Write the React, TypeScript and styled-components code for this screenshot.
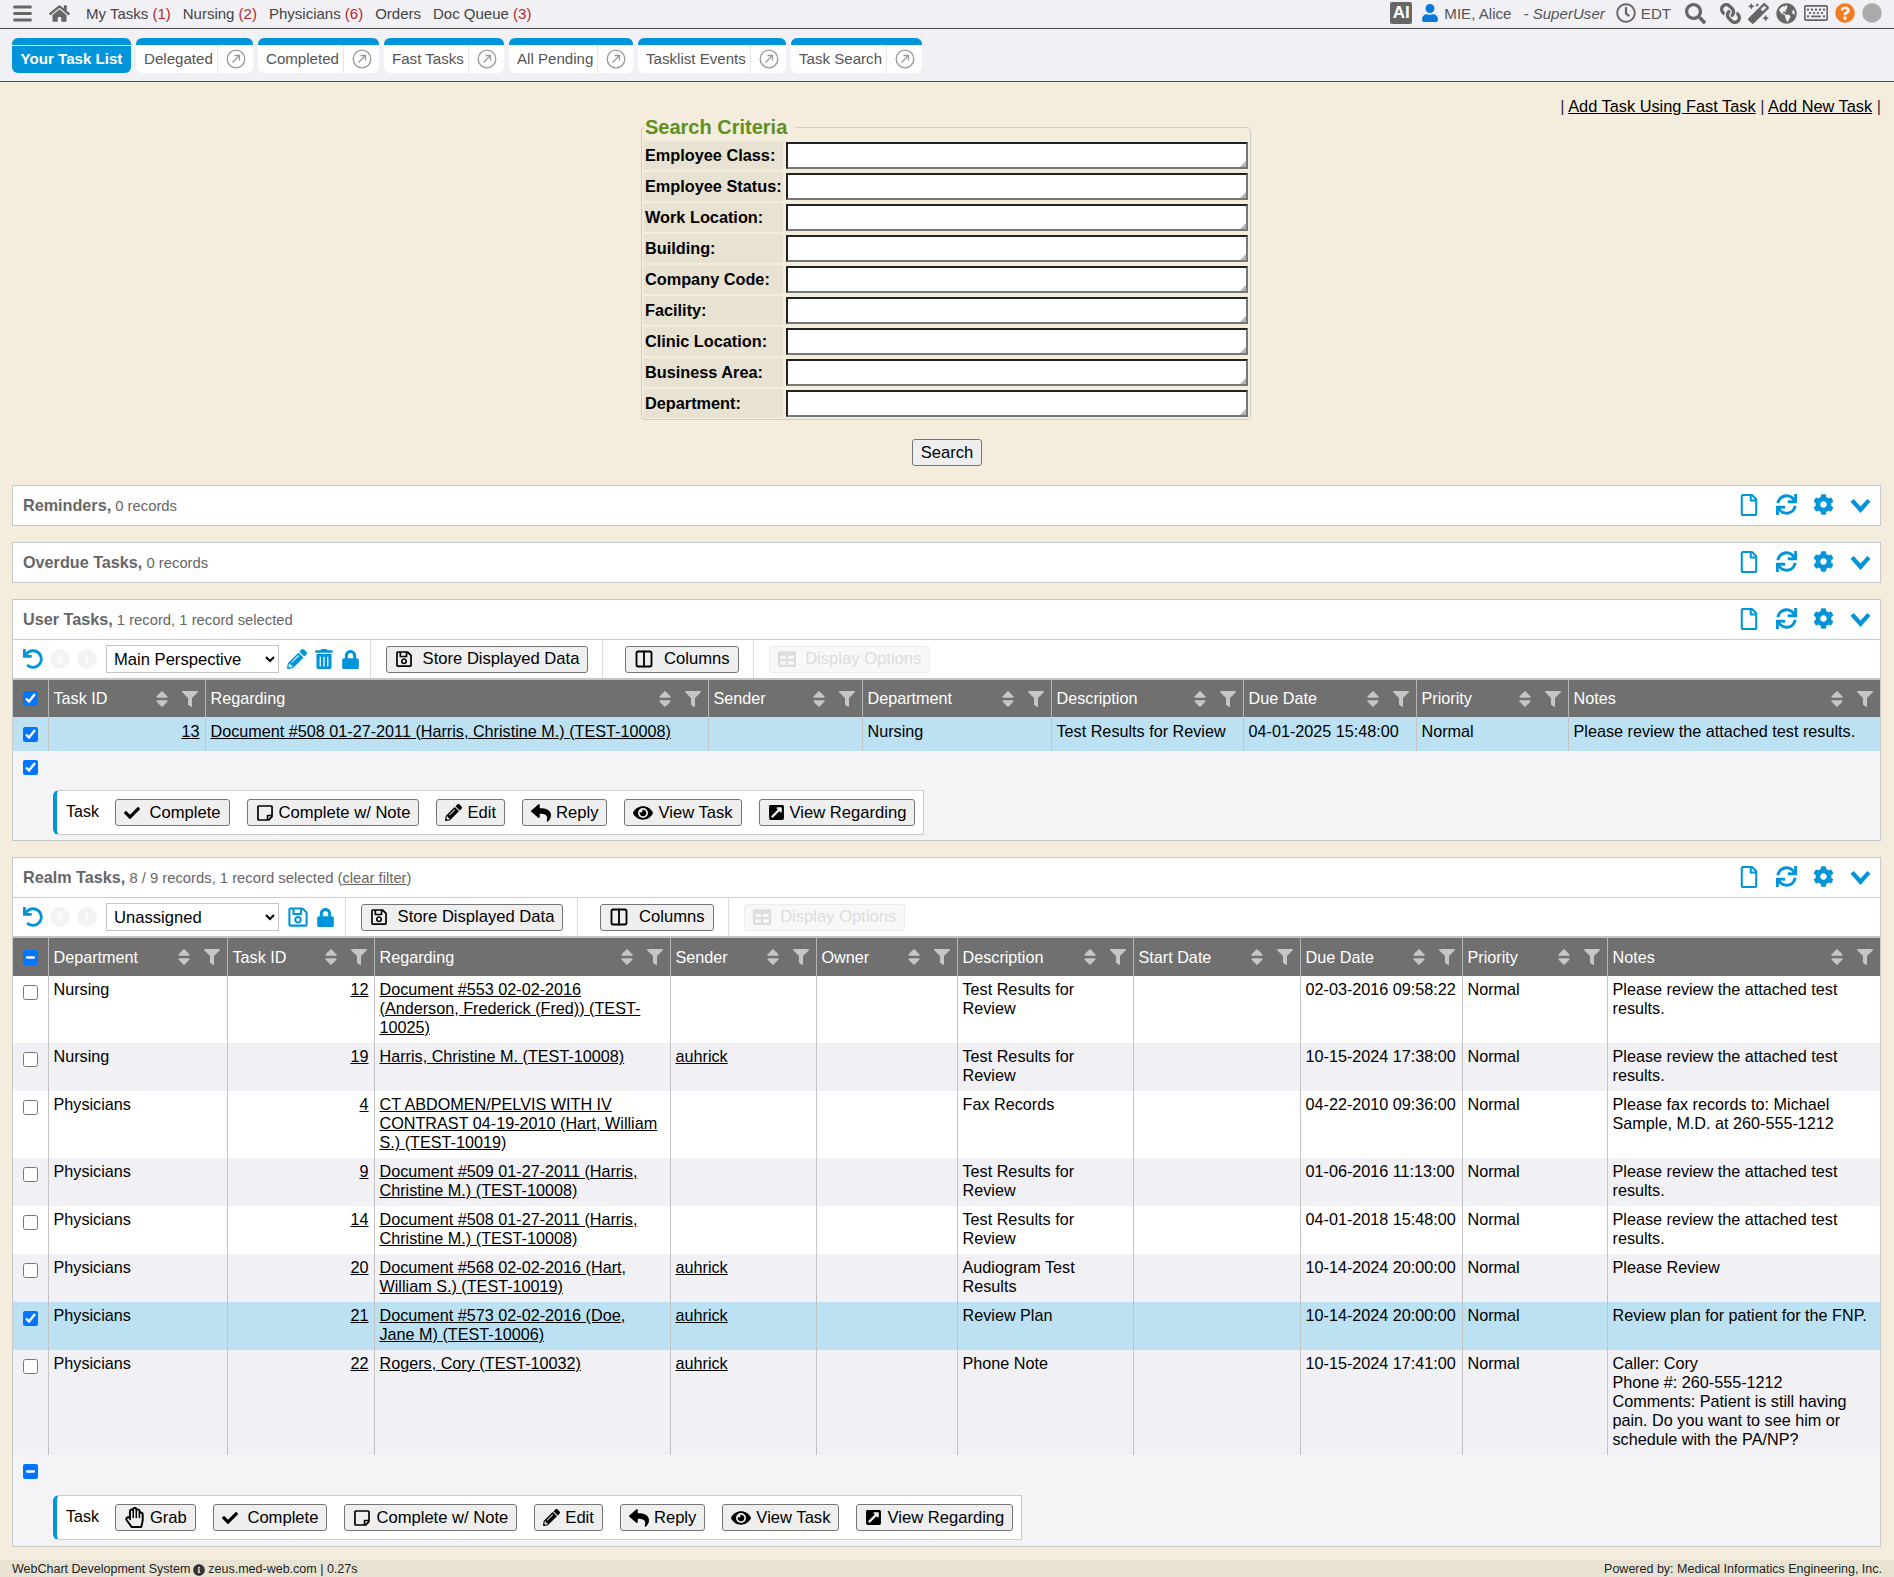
import React from 'react';
import styled, { createGlobalStyle } from 'styled-components';
import {
    FaBars,
    FaCheck,
    FaChevronLeft,
    FaChevronRight,
    FaCircle,
    FaCog,
    FaExternalLinkSquareAlt,
    FaEye,
    FaFilter,
    FaGlobeAmericas,
    FaHome,
    FaInfoCircle,
    FaLink,
    FaLock,
    FaMagic,
    FaPencilAlt,
    FaQuestionCircle,
    FaRegClock,
    FaRegFile,
    FaRegHandPaper,
    FaRegKeyboard,
    FaRegSave,
    FaRegStickyNote,
    FaReply,
    FaSearch,
    FaSort,
    FaSync,
    FaTable,
    FaTrashAlt,
    FaUndo,
    FaUser,
} from 'react-icons/fa';
import { Columns2 } from 'lucide-react';

const blue = '#0095da';
const fontStack = '"Liberation Sans", Arial, sans-serif';

const GlobalStyle = createGlobalStyle`
    html, body {
        margin: 0;
        padding: 0;
        background: #f4eddd;
        font-family: ${fontStack};
        font-size: 16px;
        color: #000;
    }
`;

const Page = styled.div`
    width: 1894px;
    height: 1577px;
    display: flex;
    flex-direction: column;
    overflow: hidden;
`;

const Icon = styled.span<{ $size: number; $color?: string }>`
    display: inline-flex;
    align-items: center;
    justify-content: center;
    flex-shrink: 0;
    color: ${props => props.$color || 'currentColor'};

    svg {
        width: ${props => props.$size}px;
        height: ${props => props.$size}px;
    }
`;

const TopBar = styled.header`
    height: 26px;
    flex-shrink: 0;
    box-sizing: content-box;
    background: #f0f0f5;
    border-bottom: 1px solid #4a4a4a;
    display: flex;
    align-items: center;
    justify-content: space-between;
    padding: 0 12px 2px;
    color: #555;
`;

const TopGroup = styled.div`
    display: flex;
    align-items: center;
`;

const HomeIcon = styled(Icon)`
    margin: 0 16px 0 16px;
`;

const NavItem = styled.span`
    margin-right: 12px;
    font-size: 15px;
    color: #444;
`;

const Count = styled.span`
    color: #b02a2a;
`;

const AiBadge = styled.span`
    width: 22px;
    height: 22px;
    border-radius: 2px;
    background: #666;
    color: #fff;
    font-weight: bold;
    font-size: 17px;
    display: flex;
    align-items: center;
    justify-content: center;
    margin-right: 9px;
`;

const TopText = styled.span<{ $gap: number }>`
    font-size: 15.1px;
    color: #555;
    margin: 0 ${props => props.$gap}px 0 5px;
`;

const RoleText = styled(TopText)`
    font-style: italic;
    margin-left: 0;
`;

const TopIcon = styled(Icon)<{ $gap: number }>`
    margin-right: ${props => props.$gap}px;
`;

const ChainIcon = styled(TopIcon)`
    svg {
        transform: scaleX(-1);
    }
`;

const TabBar = styled.nav`
    height: 43px;
    flex-shrink: 0;
    box-sizing: content-box;
    padding-top: 9px;
    background: #f0f0f5;
    border-bottom: 1px solid #4a4a4a;
    display: flex;
    gap: 5px;
    padding-left: 12px;
`;

const Tab = styled.div<{ $active?: boolean; $width: number }>`
    width: ${props => props.$width}px;
    height: 35px;
    box-sizing: border-box;
    border-top: 7px solid ${blue};
    border-radius: 6px;
    padding-bottom: ${props => (props.$active ? 2 : 0)}px;
    background: ${props => (props.$active ? blue : '#fff')};
    color: ${props => (props.$active ? '#fff' : '#555')};
    font-weight: ${props => (props.$active ? 'bold' : 'normal')};
    font-size: 15.1px;
    display: flex;
    align-items: center;
    justify-content: ${props => (props.$active ? 'center' : 'space-between')};
    box-shadow: ${props => (props.$active ? 'inset 0 1px 0 #fff' : 'none')};
`;

const TabLabel = styled.span`
    padding: 0 0 2px 8px;
    white-space: nowrap;
`;

const TabPop = styled.span`
    align-self: stretch;
    width: 35px;
    flex-shrink: 0;
    border-left: 1px solid #e6e6e6;
    display: flex;
    align-items: center;
    justify-content: center;
    svg {
        width: 20px;
        height: 20px;
    }
`;

const PopIcon = () => (
    <TabPop>
        <svg viewBox="0 0 20 20" fill="none" stroke="#999" strokeWidth="1.3">
            <circle cx="10" cy="10" r="8.8" />
            <path d="M6.5 13.5 L13.5 6.5 M8.5 6.5 H13.5 V11.5" />
        </svg>
    </TabPop>
);

const ActionLinks = styled.div`
    padding: 15px 13px 0 0;
    height: 19px;
    box-sizing: content-box;
    text-align: right;
    font-size: 16.35px;
    line-height: 19px;
    color: #333;

    a {
        color: #000;
        text-decoration: underline;
    }
`;

const SearchFieldset = styled.fieldset`
    width: 610px;
    box-sizing: border-box;
    margin: 0 0 0 641px;
    padding: 2px 2px 1px;
    border: 1px solid #ccc;
    border-radius: 4px;
    display: grid;
    grid-template-columns: 139px 1fr;
    column-gap: 3px;
    row-gap: 2px;
`;

const SearchLegend = styled.legend`
    font-size: 20px;
    line-height: 23px;
    font-weight: bold;
    color: #5f8f1f;
    padding: 0 8px 0 1px;
`;

const FieldLabel = styled.label`
    height: 29px;
    background: #e8e2d2;
    font-weight: bold;
    font-size: 16.3px;
    display: flex;
    align-items: center;
    padding-left: 1px;
    white-space: nowrap;
`;

const FieldBox = styled.div`
    position: relative;
    height: 27px;
    margin: 1px 0;

    &::after {
        content: '';
        position: absolute;
        right: 2px;
        bottom: 2px;
        width: 0;
        height: 0;
        border-style: solid;
        border-width: 0 0 6px 6px;
        border-color: transparent transparent #b5b5b5 transparent;
    }
`;

const FieldInput = styled.textarea`
    display: block;
    height: 27px;
    width: 100%;
    margin: 0;
    box-sizing: border-box;
    background: #fff;
    border-style: solid;
    border-width: 2px;
    border-color: #222 #777 #777 #222;
    padding: 0;
    resize: none;
`;

const SearchRow = styled.div`
    display: flex;
    justify-content: center;
    margin-top: 19px;
    margin-bottom: 19px;
`;

const PlainButton = styled.button`
    height: 27px;
    box-sizing: border-box;
    padding: 0 8px;
    background: #efefef;
    border: 1px solid #767676;
    border-radius: 3px;
    font-family: ${fontStack};
    font-size: 16.6px;
    color: #000;
    display: inline-flex;
    align-items: center;
    gap: 5px;
    white-space: nowrap;
    &:disabled {
        background: #f8f8f8;
        border-color: #ececec;
        color: #ddd;
    }
`;

const Panels = styled.div`
    display: flex;
    flex-direction: column;
    gap: 16px;
    margin: 0 13px 0 12px;
`;

const Panel = styled.section`
    border: 1px solid #c9c9c9;
    background: #fff;
`;

const PanelHead = styled.div`
    height: 39px;
    display: flex;
    align-items: center;
    justify-content: space-between;
    padding: 0 9px 0 10px;
`;

const PanelTitle = styled.div`
    color: #666;
    font-size: 14.8px;

    strong {
        font-size: 16.2px;
    }
    a {
        color: #666;
        text-decoration: underline;
    }
`;

const PanelTools = styled.div`
    display: flex;
    align-items: center;
    gap: 16px;
    padding-bottom: 2px;
    color: ${blue};
`;

const Toolbar = styled.div`
    height: 38px;
    border-top: 1px solid #ccc;
    border-bottom: 2px solid #c4c4c4;
    display: flex;
    align-items: stretch;
    padding-left: 10px;
`;

const ToolIcons = styled.div`
    display: flex;
    align-items: center;
    gap: 7px;
    padding-right: 10px;
    color: ${blue};
`;

const RoundNav = styled.span`
    width: 20px;
    height: 20px;
    border-radius: 50%;
    background: #f3f3f3;
    color: #fff;
    display: flex;
    align-items: center;
    justify-content: center;
    svg {
        width: 10px;
        height: 10px;
    }
`;

const PerspectiveSelect = styled.select`
    width: 173px;
    height: 28px;
    margin: 0 1px 0 2px;
    box-sizing: border-box;
    border: 1px solid #c4c4c4;
    background: #fff;
    font-family: ${fontStack};
    font-size: 16.6px;
    color: #000;
    padding-left: 3px;
`;

const ToolGroup = styled.div<{ $extra?: number }>`
    display: flex;
    align-items: center;
    border-left: 1px solid #ddd;
    padding: 0 14px 0 ${props => 15 + (props.$extra || 0)}px;
`;

const Grid = styled.table`
    width: 100%;
    border-collapse: collapse;
    table-layout: fixed;
    font-size: 16.2px;
`;

const Col = styled.col<{ $w: number }>`
    width: ${props => props.$w}px;
`;

const HeadRow = styled.tr<{ $height: number }>`
    background: #707070;
    height: ${props => props.$height}px;
`;

const Th = styled.th`
    padding: 0 7px 0 5px;
    font-weight: normal;
    color: #fff;
    border-left: 1px solid #b5b5b5;
    text-align: left;
    &:first-child {
        border-left: none;
        padding: 0;
    }
`;

const ThInner = styled.div`
    display: flex;
    align-items: center;
    white-space: nowrap;
`;

const ThLabel = styled.span`
    flex: 1;
`;

const ThIcons = styled.span`
    display: flex;
    align-items: center;
    gap: 10px;
    color: #c6c6c6;
`;

const BodyRow = styled.tr<{ $tone: 'white' | 'grey' | 'selected' }>`
    background: ${props =>
        props.$tone === 'selected' ? '#bbe1f3' : props.$tone === 'grey' ? '#f0f0f5' : '#fff'};
`;

const Td = styled.td<{ $right?: boolean; $top: number; $bottom: number }>`
    padding: ${props => props.$top}px ${props => (props.$right ? 5 : 8)}px ${props => props.$bottom}px 5px;
    line-height: 19px;
    vertical-align: top;
    border-left: 1px solid #c4c4c4;
    text-align: ${props => (props.$right ? 'right' : 'left')};
    white-space: pre-line;
    a {
        color: #000;
        text-decoration: underline;
    }
    &:first-child {
        border-left: none;
        padding: 0;
    }
`;

const DateTd = styled(Td)`
    white-space: nowrap;
`;

const CheckBox = styled.input<{ $top: number }>`
    width: 15px;
    height: 15px;
    margin: ${props => props.$top}px auto 0;
    display: block;
`;

const SubCheck = styled.input`
    width: 15px;
    height: 15px;
    margin: 0;
    display: block;
`;

const SubPanel = styled.div<{ $bottom: number }>`
    background: #f4f4f7;
    padding: 9px 0 ${props => props.$bottom}px 10px;
`;

const TaskBar = styled.div<{ $top: number }>`
    margin: ${props => props.$top}px 0 0 30px;
    width: fit-content;
    height: 45px;
    box-sizing: border-box;
    display: flex;
    align-items: center;
    gap: 17px;
    background: #fff;
    border: 1px solid #ccc;
    border-left: 4px solid ${blue};
    border-radius: 6px 0 0 6px;
    padding: 0 8px 0 9px;
`;

const TaskLabel = styled.span`
    margin-right: -1px;
    font-size: 16px;
    position: relative;
    top: -1px;
`;

const Footer = styled.footer`
    margin-top: auto;
    height: 17px;
    box-sizing: border-box;
    padding: 2px 12px 0;
    background: #e8e2d2;
    font-size: 12.5px;
    line-height: 15px;
    display: flex;
    align-items: center;
    justify-content: space-between;
    color: #222;
`;

const FooterLeft = styled.span`
    display: inline-flex;
    align-items: center;
    gap: 3px;
`;

const tabs: Array<[string, number]> = [
    ['Delegated', 117],
    ['Completed', 121],
    ['Fast Tasks', 120],
    ['All Pending', 124],
    ['Tasklist Events', 148],
    ['Task Search', 131],
];

const searchFields = [
    'Employee Class:',
    'Employee Status:',
    'Work Location:',
    'Building:',
    'Company Code:',
    'Facility:',
    'Clinic Location:',
    'Business Area:',
    'Department:',
];

const userColumns: Array<[string, number]> = [
    ['Task ID', 157],
    ['Regarding', 503],
    ['Sender', 154],
    ['Department', 189],
    ['Description', 192],
    ['Due Date', 173],
    ['Priority', 152],
    ['Notes', 312],
];

const realmColumns: Array<[string, number]> = [
    ['Department', 179],
    ['Task ID', 147],
    ['Regarding', 296],
    ['Sender', 146],
    ['Owner', 141],
    ['Description', 176],
    ['Start Date', 167],
    ['Due Date', 162],
    ['Priority', 145],
    ['Notes', 273],
];

interface RealmRow {
    dept: string;
    id: number;
    regarding: string;
    sender?: string;
    description: string;
    due: string;
    notes: string;
    selected?: boolean;
}

const review = 'Please review the attached test results.';

const realmRows: RealmRow[] = [
    {
        dept: 'Nursing',
        id: 12,
        regarding: 'Document #553 02-02-2016 (Anderson, Frederick (Fred)) (TEST-10025)',
        description: 'Test Results for Review',
        due: '02-03-2016 09:58:22',
        notes: review,
    },
    {
        dept: 'Nursing',
        id: 19,
        regarding: 'Harris, Christine M. (TEST-10008)',
        sender: 'auhrick',
        description: 'Test Results for Review',
        due: '10-15-2024 17:38:00',
        notes: review,
    },
    {
        dept: 'Physicians',
        id: 4,
        regarding: 'CT ABDOMEN/PELVIS WITH IV CONTRAST 04-19-2010 (Hart, William S.) (TEST-10019)',
        description: 'Fax Records',
        due: '04-22-2010 09:36:00',
        notes: 'Please fax records to: Michael Sample, M.D. at 260-555-1212',
    },
    {
        dept: 'Physicians',
        id: 9,
        regarding: 'Document #509 01-27-2011 (Harris, Christine M.) (TEST-10008)',
        description: 'Test Results for Review',
        due: '01-06-2016 11:13:00',
        notes: review,
    },
    {
        dept: 'Physicians',
        id: 14,
        regarding: 'Document #508 01-27-2011 (Harris, Christine M.) (TEST-10008)',
        description: 'Test Results for Review',
        due: '04-01-2018 15:48:00',
        notes: review,
    },
    {
        dept: 'Physicians',
        id: 20,
        regarding: 'Document #568 02-02-2016 (Hart, William S.) (TEST-10019)',
        sender: 'auhrick',
        description: 'Audiogram Test Results',
        due: '10-14-2024 20:00:00',
        notes: 'Please Review',
    },
    {
        dept: 'Physicians',
        id: 21,
        regarding: 'Document #573 02-02-2016 (Doe, Jane M) (TEST-10006)',
        sender: 'auhrick',
        description: 'Review Plan',
        due: '10-14-2024 20:00:00',
        notes: 'Review plan for patient for the FNP.',
        selected: true,
    },
    {
        dept: 'Physicians',
        id: 22,
        regarding: 'Rogers, Cory (TEST-10032)',
        sender: 'auhrick',
        description: 'Phone Note',
        due: '10-15-2024 17:41:00',
        notes: 'Caller: Cory\nPhone #: 260-555-1212\nComments: Patient is still having pain. Do you want to see him or schedule with the PA/NP?',
    },
];

const markIndeterminate = (el: HTMLInputElement | null) => {
    if (el) {
        el.indeterminate = true;
    }
};

const PanelActions = () => (
    <PanelTools>
        <Icon $size={22}><FaRegFile /></Icon>
        <Icon $size={21}><FaSync /></Icon>
        <Icon $size={21}><FaCog /></Icon>
        <Icon $size={21}>
            <svg viewBox="0 0 20 20" fill="none" stroke="currentColor" strokeWidth="4">
                <path d="M2 6 L10 15 L18 6" />
            </svg>
        </Icon>
    </PanelTools>
);

const HeaderCell = ({ label }: { label: string }) => (
    <Th>
        <ThInner>
            <ThLabel>{label}</ThLabel>
            <ThIcons>
                <Icon $size={20}><FaSort /></Icon>
                <Icon $size={16}><FaFilter /></Icon>
            </ThIcons>
        </ThInner>
    </Th>
);

const TableToolbar = ({ view, children }: { view: string; children: React.ReactNode }) => (
    <Toolbar>
        <ToolIcons>
            <Icon $size={20}><FaUndo /></Icon>
            <RoundNav><FaChevronLeft /></RoundNav>
            <RoundNav><FaChevronRight /></RoundNav>
            <PerspectiveSelect defaultValue={view}>
                <option>{view}</option>
            </PerspectiveSelect>
            {children}
        </ToolIcons>
        <ToolGroup>
            <PlainButton>
                <Icon $size={18}><FaRegSave /></Icon>
                <span>&nbsp;Store Displayed Data</span>
            </PlainButton>
        </ToolGroup>
        <ToolGroup $extra={7}>
            <PlainButton>
                <Icon $size={20}><Columns2 strokeWidth={2.2} /></Icon>
                <span>&nbsp;Columns</span>
            </PlainButton>
        </ToolGroup>
        <ToolGroup>
            <PlainButton disabled>
                <Icon $size={18}><FaTable /></Icon>
                <span>&nbsp;Display Options</span>
            </PlainButton>
        </ToolGroup>
    </Toolbar>
);

const TaskActions = ({ grab }: { grab?: boolean }) => (
    <TaskBar $top={grab ? 16 : 15}>
        <TaskLabel>Task</TaskLabel>
        {grab && (
            <PlainButton>
                <Icon $size={21}><FaRegHandPaper /></Icon>Grab
            </PlainButton>
        )}
        <PlainButton>
            <Icon $size={16}><FaCheck /></Icon>&nbsp;Complete
        </PlainButton>
        <PlainButton>
            <Icon $size={18}><FaRegStickyNote /></Icon>Complete w/ Note
        </PlainButton>
        <PlainButton>
            <Icon $size={17}><FaPencilAlt /></Icon>Edit
        </PlainButton>
        <PlainButton>
            <Icon $size={20}><FaReply /></Icon>Reply
        </PlainButton>
        <PlainButton>
            <Icon $size={20}><FaEye /></Icon>View Task
        </PlainButton>
        <PlainButton>
            <Icon $size={17}><FaExternalLinkSquareAlt /></Icon>View Regarding
        </PlainButton>
    </TaskBar>
);

export default function App() {
    return (
        <Page>
            <GlobalStyle />
            <TopBar>
                <TopGroup>
                    <Icon $size={21} $color="#666"><FaBars /></Icon>
                    <HomeIcon $size={21} $color="#666"><FaHome /></HomeIcon>
                    <NavItem>My Tasks <Count>(1)</Count></NavItem>
                    <NavItem>Nursing <Count>(2)</Count></NavItem>
                    <NavItem>Physicians <Count>(6)</Count></NavItem>
                    <NavItem>Orders</NavItem>
                    <NavItem>Doc Queue <Count>(3)</Count></NavItem>
                </TopGroup>
                <TopGroup>
                    <AiBadge>AI</AiBadge>
                    <Icon $size={18} $color="#0a78d7"><FaUser /></Icon>
                    <TopText $gap={12}>MIE, Alice</TopText>
                    <RoleText $gap={11}>- SuperUser</RoleText>
                    <Icon $size={20} $color="#666"><FaRegClock /></Icon>
                    <TopText $gap={14}>EDT</TopText>
                    <TopIcon $size={21} $gap={14} $color="#666"><FaSearch /></TopIcon>
                    <ChainIcon $size={21} $gap={7} $color="#666"><FaLink /></ChainIcon>
                    <TopIcon $size={21} $gap={7} $color="#666"><FaMagic /></TopIcon>
                    <TopIcon $size={21} $gap={7} $color="#666"><FaGlobeAmericas /></TopIcon>
                    <TopIcon $size={24} $gap={7} $color="#666"><FaRegKeyboard /></TopIcon>
                    <TopIcon $size={20} $gap={7} $color="#f47b20"><FaQuestionCircle /></TopIcon>
                    <Icon $size={20} $color="#aaa"><FaCircle /></Icon>
                </TopGroup>
            </TopBar>
            <TabBar>
                <Tab $active $width={119}>Your Task List</Tab>
                {tabs.map(([label, width]) => (
                    <Tab key={label} $width={width}>
                        <TabLabel>{label}</TabLabel>
                        <PopIcon />
                    </Tab>
                ))}
            </TabBar>
            <ActionLinks>
                | <a>Add Task Using Fast Task</a> | <a>Add New Task</a> |
            </ActionLinks>
            <SearchFieldset>
                <SearchLegend>Search Criteria</SearchLegend>
                {searchFields.map(field => (
                    <React.Fragment key={field}>
                        <FieldLabel>{field}</FieldLabel>
                        <FieldBox>
                            <FieldInput />
                        </FieldBox>
                    </React.Fragment>
                ))}
            </SearchFieldset>
            <SearchRow>
                <PlainButton>Search</PlainButton>
            </SearchRow>
            <Panels>
                <Panel>
                    <PanelHead>
                        <PanelTitle><strong>Reminders,</strong> 0 records</PanelTitle>
                        <PanelActions />
                    </PanelHead>
                </Panel>
                <Panel>
                    <PanelHead>
                        <PanelTitle><strong>Overdue Tasks,</strong> 0 records</PanelTitle>
                        <PanelActions />
                    </PanelHead>
                </Panel>
                <Panel>
                    <PanelHead>
                        <PanelTitle><strong>User Tasks,</strong> 1 record, 1 record selected</PanelTitle>
                        <PanelActions />
                    </PanelHead>
                    <TableToolbar view="Main Perspective">
                        <Icon $size={20}><FaPencilAlt /></Icon>
                        <Icon $size={20}><FaTrashAlt /></Icon>
                        <Icon $size={19}><FaLock /></Icon>
                    </TableToolbar>
                    <Grid>
                        <colgroup>
                            <Col $w={35} />
                            {userColumns.map(([label, width]) => <Col key={label} $w={width} />)}
                        </colgroup>
                        <thead>
                            <HeadRow $height={37}>
                                <Th><CheckBox $top={0} type="checkbox" checked readOnly /></Th>
                                {userColumns.map(([label]) => <HeaderCell key={label} label={label} />)}
                            </HeadRow>
                        </thead>
                        <tbody>
                            <BodyRow $tone="selected">
                                <Td $top={5} $bottom={10}><CheckBox $top={10} type="checkbox" checked readOnly /></Td>
                                <Td $top={5} $bottom={10} $right><a>13</a></Td>
                                <Td $top={5} $bottom={10}><a>Document #508 01-27-2011 (Harris, Christine M.) (TEST-10008)</a></Td>
                                <Td $top={5} $bottom={10} />
                                <Td $top={5} $bottom={10}>Nursing</Td>
                                <Td $top={5} $bottom={10}>Test Results for Review</Td>
                                <DateTd $top={5} $bottom={10}>04-01-2025 15:48:00</DateTd>
                                <Td $top={5} $bottom={10}>Normal</Td>
                                <Td $top={5} $bottom={10}>{review}</Td>
                            </BodyRow>
                        </tbody>
                    </Grid>
                    <SubPanel $bottom={5}>
                        <SubCheck type="checkbox" checked readOnly />
                        <TaskActions />
                    </SubPanel>
                </Panel>
                <Panel>
                    <PanelHead>
                        <PanelTitle><strong>Realm Tasks,</strong> 8 / 9 records, 1 record selected (<a>clear filter</a>)</PanelTitle>
                        <PanelActions />
                    </PanelHead>
                    <TableToolbar view="Unassigned">
                        <Icon $size={22}><FaRegSave /></Icon>
                        <Icon $size={19}><FaLock /></Icon>
                    </TableToolbar>
                    <Grid>
                        <colgroup>
                            <Col $w={35} />
                            {realmColumns.map(([label, width]) => <Col key={label} $w={width} />)}
                        </colgroup>
                        <thead>
                            <HeadRow $height={38}>
                                <Th><CheckBox $top={0} type="checkbox" ref={markIndeterminate} readOnly /></Th>
                                {realmColumns.map(([label]) => <HeaderCell key={label} label={label} />)}
                            </HeadRow>
                        </thead>
                        <tbody>
                            {realmRows.map((row, index) => (
                                <BodyRow
                                    key={row.id}
                                    $tone={row.selected ? 'selected' : index % 2 === 1 ? 'grey' : 'white'}
                                >
                                    <Td $top={4} $bottom={6}><CheckBox $top={9} type="checkbox" checked={!!row.selected} readOnly /></Td>
                                    <Td $top={4} $bottom={6}>{row.dept}</Td>
                                    <Td $top={4} $bottom={6} $right><a>{row.id}</a></Td>
                                    <Td $top={4} $bottom={6}><a>{row.regarding}</a></Td>
                                    <Td $top={4} $bottom={6}>{row.sender && <a>{row.sender}</a>}</Td>
                                    <Td $top={4} $bottom={6} />
                                    <Td $top={4} $bottom={6}>{row.description}</Td>
                                    <Td $top={4} $bottom={6} />
                                    <DateTd $top={4} $bottom={6}>{row.due}</DateTd>
                                    <Td $top={4} $bottom={6}>Normal</Td>
                                    <Td $top={4} $bottom={6}>{row.notes}</Td>
                                </BodyRow>
                            ))}
                        </tbody>
                    </Grid>
                    <SubPanel $bottom={6}>
                        <SubCheck type="checkbox" ref={markIndeterminate} readOnly />
                        <TaskActions grab />
                    </SubPanel>
                </Panel>
            </Panels>
            <Footer>
                <FooterLeft>
                    WebChart Development System
                    <Icon $size={12} $color="#333"><FaInfoCircle /></Icon>
                    zeus.med-web.com | 0.27s
                </FooterLeft>
                <span>Powered by: Medical Informatics Engineering, Inc.</span>
            </Footer>
        </Page>
    );
}
